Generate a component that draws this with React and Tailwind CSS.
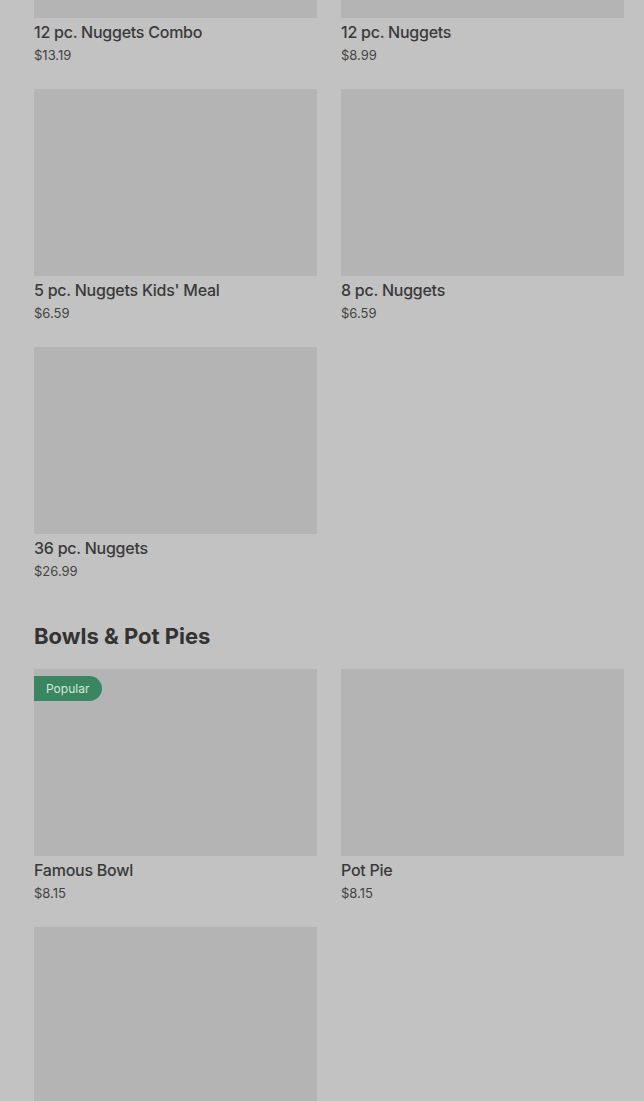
import React from "react";

function Card({ name, price, badge }) {
  return (
    <div className="flex flex-col">
      <div className="relative h-[187px] bg-[#b4b4b4]">
        {badge && (
          <span className="absolute left-0 top-[7px] flex h-[25px] items-center rounded-r-full bg-[#3a8661] pl-3 pr-[13px] text-[12px] text-[#d6e6dd]">
            {badge}
          </span>
        )}
      </div>
      {name && (
        <>
          <div className="mt-[2px] text-[16px] leading-[24px] font-medium tracking-[-0.25px] text-[#3a3a3a]">{name}</div>
          <div className="mt-[1px] text-[13px] leading-[20px] text-[#444]">{price}</div>
        </>
      )}
    </div>
  );
}

export default function App() {
  const nuggets = [
    { name: "12 pc. Nuggets Combo", price: "$13.19" },
    { name: "12 pc. Nuggets", price: "$8.99" },
    { name: "5 pc. Nuggets Kids' Meal", price: "$6.59" },
    { name: "8 pc. Nuggets", price: "$6.59" },
    { name: "36 pc. Nuggets", price: "$26.99" },
  ];
  const bowls = [
    { name: "Famous Bowl", price: "$8.15", badge: "Popular" },
    { name: "Pot Pie", price: "$8.15" },
    { name: "", price: "" },
  ];
  return (
    <div
      className="h-[1101px] overflow-hidden bg-[#c2c2c2] pl-[34px] pr-[20px]"
      style={{ fontFamily: "Inter, 'Noto Sans', sans-serif" }}
    >
      <div className="mt-[-169px] grid grid-cols-2 gap-x-[24px] gap-y-[24px]">
        {nuggets.map((c) => (
          <Card key={c.name} {...c} />
        ))}
      </div>
      <h2 className="mt-[39px] text-[22px] leading-[32px] font-bold text-[#333]">
        Bowls &amp; Pot Pies
      </h2>
      <div className="mt-[17px] grid grid-cols-2 gap-x-[24px] gap-y-[24px]">
        {bowls.map((c, i) => (
          <Card key={i} {...c} />
        ))}
      </div>
    </div>
  );
}
